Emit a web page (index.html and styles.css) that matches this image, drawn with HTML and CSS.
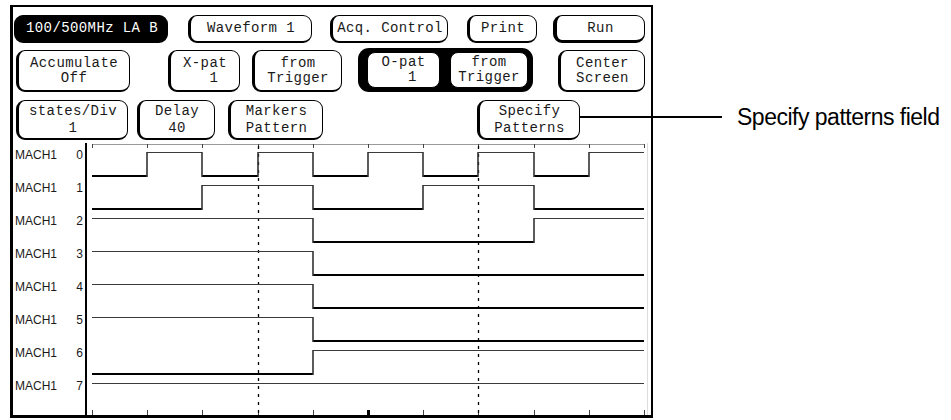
FILE: index.html
```html
<!DOCTYPE html>
<html lang="en">
<head>
  <meta charset="UTF-8">
  <title>Waveform 1</title>
  <link rel="stylesheet" href="styles.css">
</head>
<body>
  <div class="page">
    <div class="screen">
      <div class="row row-top">
        <div class="key key-dark k-unit">100/500MHz LA B</div>
        <div class="key k-waveform">Waveform 1</div>
        <div class="key k-acq">Acq. Control</div>
        <div class="key k-print">Print</div>
        <div class="key k-run">Run</div>
      </div>
      <div class="row row-mid">
        <div class="key k-accum"><span>Accumulate</span><span>Off</span></div>
        <div class="key k-xpat"><span>X-pat</span><span>   1 </span></div>
        <div class="key k-xfrom"><span>from</span><span>Trigger</span></div>
        <div class="group">
          <div class="key k-opat"><span>O-pat</span><span>   1 </span></div>
          <div class="key k-ofrom"><span>from</span><span>Trigger</span></div>
        </div>
        <div class="key k-center"><span>Center</span><span>Screen</span></div>
      </div>
      <div class="row row-low">
        <div class="key k-scale"><span>states/Div</span><span>1</span></div>
        <div class="key k-delay"><span>Delay</span><span>40</span></div>
        <div class="key k-markers"><span>Markers</span><span>Pattern</span></div>
        <div class="key k-specify"><span>Specify</span><span>Patterns</span></div>
      </div>
      <div class="wave">
        <div class="labels">
          <div class="label"><span>MACH1</span><span>0</span></div>
          <div class="label"><span>MACH1</span><span>1</span></div>
          <div class="label"><span>MACH1</span><span>2</span></div>
          <div class="label"><span>MACH1</span><span>3</span></div>
          <div class="label"><span>MACH1</span><span>4</span></div>
          <div class="label"><span>MACH1</span><span>5</span></div>
          <div class="label"><span>MACH1</span><span>6</span></div>
          <div class="label"><span>MACH1</span><span>7</span></div>
        </div>
        <svg id="traces" class="traces" width="564" height="272" viewBox="0 0 564 272"></svg>
      </div>
    </div>
    <p class="note">Specify patterns field</p>
  </div>
  <script>
    const svg = document.getElementById('traces');
    const NS = 'http://www.w3.org/2000/svg';
    const x0 = 5;
    const step = 55.2;

    // 1 = high, 0 = low, one value per division
    const rows = [
      [0,1,0,1,0,1,0,1,0,1],
      [0,0,1,1,0,0,1,1,0,0],
      [1,1,1,1,0,0,0,0,1,1],
      [1,1,1,1,0,0,0,0,0,0],
      [1,1,1,1,0,0,0,0,0,0],
      [1,1,1,1,0,0,0,0,0,0],
      [0,0,0,0,1,1,1,1,1,1],
      [1,1,1,1,1,1,1,1,1,1]
    ];

    function xAt(k) {
      return Math.round(x0 + step * k);
    }

    function line(x1, y1, x2, y2, cls) {
      const l = document.createElementNS(NS, 'line');
      l.setAttribute('x1', x1);
      l.setAttribute('y1', y1);
      l.setAttribute('x2', x2);
      l.setAttribute('y2', y2);
      l.setAttribute('class', cls);
      svg.appendChild(l);
    }

    // graticule
    line(xAt(0), 1.5, xAt(10), 1.5, 'grid');
    line(560.5, 0, 560.5, 272, 'edge-faint');
    for (let k = 0; k <= 10; k++) {
      line(xAt(k) + 0.5, 1, xAt(k) + 0.5, 5, 'tick');
      line(xAt(k) + 0.5, 267, xAt(k) + 0.5, 272, 'tick');
    }
    const mark = document.createElementNS(NS, 'rect');
    mark.setAttribute('x', xAt(5) - 1);
    mark.setAttribute('y', 267);
    mark.setAttribute('width', 3);
    mark.setAttribute('height', 5);
    svg.appendChild(mark);

    // cursors
    line(xAt(3) + 0.5, 3, xAt(3) + 0.5, 272, 'cursor');
    line(xAt(7) + 0.5, 3, xAt(7) + 0.5, 272, 'cursor');

    rows.forEach((levels, i) => {
      const hi = 9 + 33 * i;
      const lo = hi + 24;
      levels.forEach((v, k) => {
        if (v) {
          line(xAt(k), hi + 0.5, xAt(k + 1), hi + 0.5, 'hi');
        } else {
          line(xAt(k), lo, xAt(k + 1), lo, 'lo');
        }
        if (k > 0 && levels[k - 1] !== v) {
          line(xAt(k), hi, xAt(k), lo + 1, 'edge');
        }
      });
    });
  </script>
</body>
</html>
```

FILE: styles.css
```css
body {
  margin: 0;
  background-color: #fff;
  color: #000;
  font-family: "Liberation Mono", monospace;
}

.page {
  display: flex;
  align-items: flex-start;
}

.screen {
  box-sizing: border-box;
  width: 643px;
  height: 413px;
  margin: 5px 0 0 10px;
  padding-top: 8px;
  border: 2px solid #000;
  border-left-width: 3px;
  border-bottom-width: 3px;
  display: flex;
  flex-direction: column;
}

.row {
  display: flex;
}

.row-top {
  height: 28px;
}

.row-mid {
  height: 44px;
  margin-top: 5px;
  align-items: flex-end;
}

.row-low {
  height: 40px;
  margin-top: 8px;
}

.key {
  box-sizing: border-box;
  height: 100%;
  display: flex;
  flex-direction: column;
  align-items: center;
  justify-content: center;
  background-color: #fff;
  color: #1a1a1a;
  border: 1px solid #000;
  border-left-width: 3px;
  border-bottom-width: 2px;
  border-radius: 9px;
  font-size: 14px;
  line-height: 15px;
  letter-spacing: 0.4px;
  white-space: pre;
}

.row-mid .key {
  height: 42px;
}

.row-low .key {
  line-height: 17px;
}

.key-dark {
  background-color: #000;
  color: #fff;
}

/* top row */
.k-unit { width: 154px; margin-left: 1px; }
.k-waveform { width: 124px; margin-left: 20px; }
.k-acq { width: 118px; margin-left: 18px; }
.k-print { width: 70px; margin-left: 19px; }
.k-run {
  width: 92px;
  margin-left: 16px;
  border-left-width: 4px;
  border-bottom-width: 3px;
}

/* middle row */
.k-accum { width: 114px; margin-left: 3px; }
.k-xpat { width: 72px; margin-left: 38px; }
.k-xfrom { width: 90px; margin-left: 12px; }
.k-center { width: 87px; margin-left: 25px; }

.group {
  box-sizing: border-box;
  width: 175px;
  height: 44px;
  margin-left: 16px;
  padding: 4px 5px 4px 9px;
  display: flex;
  gap: 10px;
  background-color: #000;
  border-radius: 11px;
}

.row-mid .group .key {
  height: 36px;
  border-width: 1px;
  border-radius: 8px;
}

.k-opat { width: 73px; }
.k-ofrom { width: 78px; }

/* bottom row */
.k-scale { width: 112px; margin-left: 3px; }
.k-delay { width: 78px; margin-left: 9px; }
.k-markers { width: 95px; margin-left: 13px; }
.k-specify {
  position: relative;
  width: 103px;
  margin-left: 154px;
}

.k-specify::after {
  content: "";
  position: absolute;
  left: 100%;
  top: 15px;
  width: 143px;
  height: 2px;
  background-color: #000;
}

/* waveform area */
.wave {
  flex: 1;
  margin-top: 3px;
  display: flex;
}

.labels {
  width: 72px;
  padding-top: 6px;
  border-right: 2px solid #000;
  font-family: "Liberation Sans", Arial, sans-serif;
  font-size: 12px;
  line-height: 12px;
  color: #1a1a1a;
}

.label {
  height: 33px;
  display: flex;
  justify-content: space-between;
  padding: 0 2px 0 2px;
}

.traces {
  display: block;
}

.traces line {
  fill: none;
}

.traces .grid {
  stroke: #999;
  stroke-width: 1;
}

.traces .tick {
  stroke: #444;
  stroke-width: 1;
}

.traces .edge-faint {
  stroke: #ddd;
  stroke-width: 1;
}

.traces .cursor {
  stroke: #000;
  stroke-width: 1.3;
  stroke-dasharray: 3 5;
}

.traces .hi {
  stroke: #3a3a3a;
  stroke-width: 1;
}

.traces .lo {
  stroke: #000;
  stroke-width: 2;
}

.traces .edge {
  stroke: #333;
  stroke-width: 1.6;
}

.note {
  margin: 104px 0 0 84px;
  font-family: "Liberation Sans", Arial, sans-serif;
  font-size: 23px;
  line-height: 26px;
  letter-spacing: -0.5px;
  white-space: nowrap;
}
```
